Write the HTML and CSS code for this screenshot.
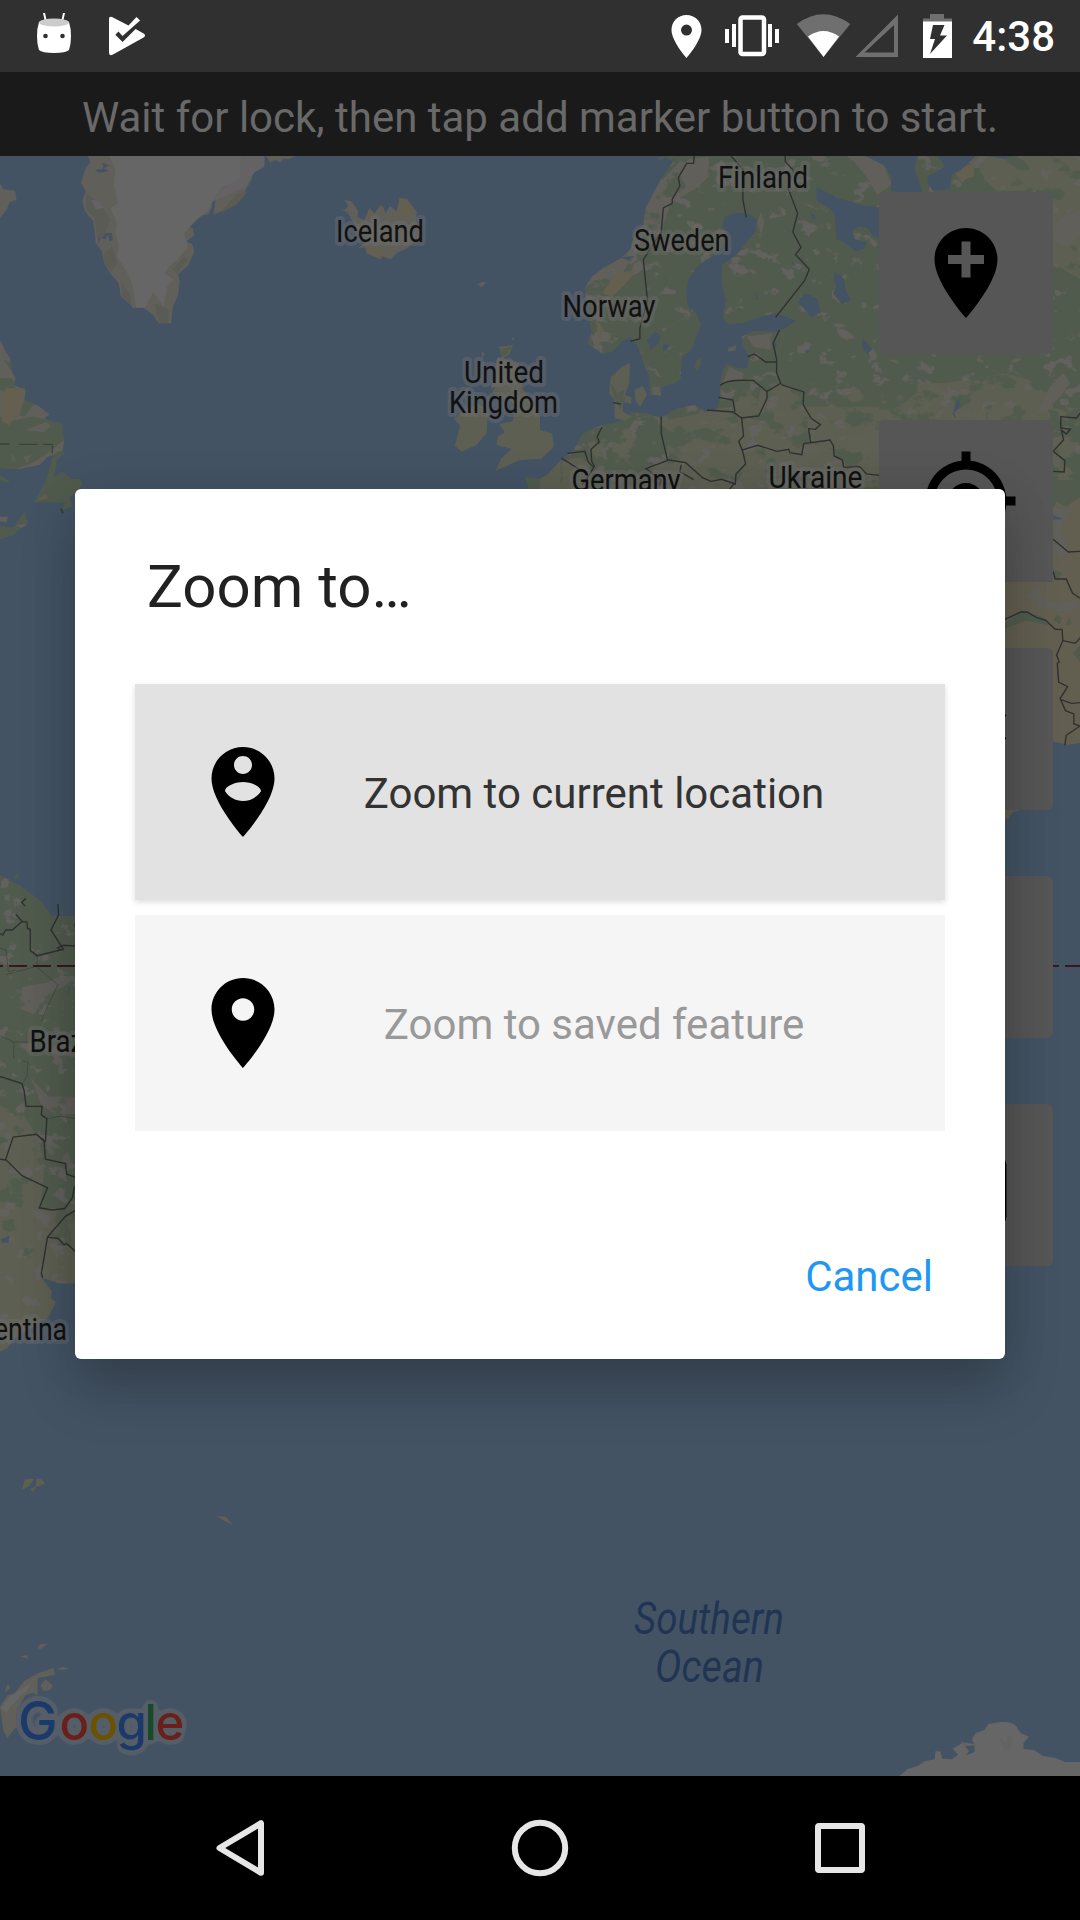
FILE: index.html
```html
<!DOCTYPE html>
<html lang="en">
<head>
<meta charset="utf-8">
<title>Zoom to…</title>
<link rel="stylesheet" href="styles.css">
</head>
<body>
<div class="screen">
  <header class="status-bar">
    <div class="status-group">
      <svg class="notification" width="34" height="54" viewBox="37 0 34 54">
        <path class="on" d="M43 13l2 0 2 9-2 0zM63 13h2l-2 9h-2z"/>
        <path class="on" d="M39 22q15-6 30 0 2 6 2 14t-2 14q-3 3-15 3t-15-3q-2-6-2-14t2-14z"/>
        <ellipse class="cap" cx="54" cy="22.500" rx="15" ry="4"/>
        <circle class="hole" cx="45.500" cy="36" r="2.300"/><circle class="hole" cx="62.500" cy="36" r="2.300"/>
      </svg>
      <svg class="notification" width="37" height="56" viewBox="109 0 37 56">
        <path class="on" d="M109 19q0-3 3-2l16.500 8.500 8-8.500 3.600 3.500L122.500 36l-4-4.500-3.200 3.200 7.300 7.300 13-13 8 4.500q3 2 0 4L113 54.500q-4 2-4-2z"/>
      </svg>
    </div>
    <div class="status-group right">
      <svg width="385" height="72" viewBox="660 0 385 72">
        <path class="on" fill-rule="evenodd" d="M686.500 15c-8.500 0-15 6.500-15 15 0 11 15 28 15 28s15-17 15-28c0-8.500-6.500-15-15-15zm0 9.600a5.500 5.500 0 1 1 0 11 5.500 5.500 0 0 1 0-11z"/>
        <rect class="line" x="740.500" y="17.500" width="23.500" height="36.500" rx="2"/>
        <path class="on" d="M725 29h4v14h-4zM732 24h4v23h-4zM768 24h4v23h-4zM775 29h4v14h-4z"/>
        <path class="off" d="M796.800 24q26.500-19.500 53.500 0L823.500 57z"/>
        <path class="on" d="M808 36.500q15.500-11 31 0L823.500 57z"/>
        <path class="off" fill-rule="evenodd" d="M898 14.500V57h-42.500zM894 25L864.500 52.500H894z"/>
        <path class="off" d="M930 14h14v4.500h8V22h-29v-3.500h7z"/>
        <path class="on" fill-rule="evenodd" d="M923 21.500h29V58h-29zM933 25l-3 14h5l-5 15 17-18.500h-7l4.500-10.500z"/>
      </svg>
      <time class="clock">4:38</time>
    </div>
  </header>

  <div class="banner"><p class="banner-text">Wait for lock, then tap add marker button to start.</p></div>

  <main class="map">
    <svg class="map-canvas" width="1080" height="1620" viewBox="0 156 1080 1620">
      <defs>
        <filter id="scrub" x="0" y="0" width="1" height="1" color-interpolation-filters="sRGB">
          <feTurbulence type="fractalNoise" baseFrequency="0.02 0.024" numOctaves="4" seed="7"/>
          <feColorMatrix values="0 0 0 0 .388  0 0 0 0 .38  0 0 0 0 .365  14 0 0 0 -8.500"/>
          <feComposite operator="in" in2="SourceGraphic"/>
        </filter>
        <filter id="plain" x="0" y="0" width="1" height="1" color-interpolation-filters="sRGB">
          <feTurbulence type="fractalNoise" baseFrequency="0.011 0.013" numOctaves="4" seed="21"/>
          <feColorMatrix values="0 0 0 0 .365  0 0 0 0 .375  0 0 0 0 .32  0 18 0 0 -9.900"/>
          <feComposite operator="in" in2="SourceGraphic"/>
        </filter>
        <filter id="wood" x="0" y="0" width="1" height="1" color-interpolation-filters="sRGB">
          <feTurbulence type="fractalNoise" baseFrequency="0.014 0.018" numOctaves="4" seed="4"/>
          <feColorMatrix values="0 0 0 0 .318  0 0 0 0 .357  0 0 0 0 .302  0 0 14 0 -8.200"/>
          <feComposite operator="in" in2="SourceGraphic"/>
        </filter>
        <filter id="halo" filterUnits="userSpaceOnUse" x="0" y="1680" width="210" height="96" color-interpolation-filters="sRGB">
          <feGaussianBlur in="SourceAlpha" stdDeviation="3.600"/>
          <feColorMatrix values="0 0 0 0 .333  0 0 0 0 .365  0 0 0 0 .4  0 0 0 22 -1"/>
          <feMerge><feMergeNode/><feMergeNode in="SourceGraphic"/></feMerge>
        </filter>
        <path id="europe" d="M395 18L380 45 350 90 330 130 308 170 300 225 275 250 262 300 235 325 190 350 150 380 130 415 135 470 145 520 150 545 138 580 182 612 212 605 235 575 262 562 285 590 300 640 318 680 320 735 350 738 355 710 383 702 408 690 413 620 440 600 467 525 455 490 430 470 425 430 430 390 455 350 480 330 520 310 530 290 545 255 530 230 535 200 570 188 610 192 630 210 628 240 600 275 575 310 550 330 528 345 528 400 540 450 530 500 545 522 590 518 650 498 680 490 745 512 720 530 690 545 620 543 585 560 590 590 605 615 603 655 575 655 540 640 525 680 522 740 515 775 480 785 450 765 400 775 350 803 310 790 265 785 240 812 165 830 125 850 95 905 62 930 20 975 0 985V1100H1568V18z"/>
        <clipPath id="europe-clip"><use href="#europe"/></clipPath>
        <path id="america" d="M0 70l60 30 60 45 30 40h68v1028h-48l-50-16 30 38-2 20 14 10-22 45-40 20-60 40-20 25-20 10z"/>
        <clipPath id="america-clip"><use href="#america"/></clipPath>
      </defs>

      <!-- North Atlantic: Greenland, Iceland, Labrador, British Isles -->
      <g transform="translate(0 150) scale(.3444 .3333)">
        <path class="rock" d="M255 18l7 18-14 20-13 42 14 26-10 28 8 32 24 30 7 66 17 22 8 40 20 32 22 26 6 40 18 10 16 23h30l28 20 18 27h36l5-50 15-36 5-40-5-20 30-30 17-38-6-24-16-8 22-18-4-22-16-4 22-14 5-16 35-8 10-22-4-20 14-2-6 46 50-24 34-34 26-46 5-30 24-16V18z"/>
        <path class="rock-shade" d="M250 130l40 30 30 50-15 40-20 20-10-65-25-25zM300 310l25-20 15 50-15 25-20-20zM355 400l25 40 0 25-25-20zM450 460l40 20-3 38-20 0-12-25zM500 360l35-40 12 10-32 40zM655 170l35-40 30-5-35 40-45 24z"/>
        <path class="water" d="M275 60l15 8 25-4-13-10 15-8-22-8 6 12-4 8zM285 282l6-18 14 4 10-14 2 20 10-4-2-22-18 2-12 14-10-2z"/>
        <path class="ice" d="M318 18l17 42-5 40 12 60-22 15 20 45-5 30 10 35-5 35 25 40 20 45 10 68 25 0 25-48 30 45 10-60 20-20-25-20 10-20 25-20 30-40-10-40 30-35 40-35 15-30 25-40 60-20V50l30-32z"/>
        <path class="snow" d="M700 18h68v32l-28 16-30 45-60 30-34 14 30-40 50-30zM265 150l25 2 12 22-25 4z"/>
        <path class="rock" d="M770 18h86l-16 10-18-2-8 12-14-8-16 8-8-16zM0 100l10 18 34 4 4 28-20 6-8 22-20 26z"/>
        <path class="rock" d="M985 175l15 5 12-12-12-18 20 4 20 28-2 20 20 8 14-36 16 16 16-24 8 4 8 20 12-22 20 16 8-40 22 2 12 18 16 20-2 30 12 20-6 34-30 26-30 14-20 20-50-18-18-18-26 2 20-15-50-90z"/>
        <path class="sand" d="M1160 145l20 5 25 30-20 20-30-5 10-18zM1070 180l16 16-16 14zM1060 290l60 10-15 28-40-18z"/>
        <path class="rock" d="M1385 403l12-6 14-2-12 17z"/>
        <path class="scrub-land" d="M0 570l14 30 16 25 0 30 15 30-5 20 35 15-5 35 38 10 36 28-15 12 52 40 5 30-5 30-42 15-24 25-60 12-55-3z"/>
        <path class="green" d="M0 685h35l10 30-30 10-15-5zM12 630l18 5 8 38zM70 750l30 10-30 40-14-4zM95 800l85 20 5 50-35 30-55 38-50 20-45-4V800l45 10z"/>
        <path class="sand" d="M15 715l58 0-6 36-20 50-20 25-22-12 0-40z"/>
        <path class="scrub-land" d="M75 840l60-25 12 12-20 20zM30 905l12 20-2 16zM68 920l22-6-12 28z"/>
        <path class="border" d="M0 882h28M55 883h54M125 883h27v27" opacity=".6"/>
        <path class="green" d="M190 905l-24 25-10 50 25-15 28 22 22 0 8 12-12 26-25 15 8 30-35 14 15-26-90-2 20-38 15-30 15-60 18-24zM0 975l30 20-12 2-18-6z"/>
        <path class="sand" d="M105 1052l28-20 6 14z"/><path class="border" d="M178 1076l4 14"/>
        <path class="green" d="M72 1083l2 18 8 22-26 15-16 18-40 12v-40l40 4z"/><path class="scrub-land" d="M0 1100h24l-6 18-18-4zM45 1125l34-4-16 14z"/>
        <path class="olive" d="M1445 590l45-4-12 28-20 12 18 4 30 6 12 80 50 80v130l-60 5-70 32 18-38 30-28-44-12 4-26 20-12-16-24 40-10 4-50-20-16-30-2-14-18 22-60 6-60zM1398 604l10 6-8 16z"/>
        <path class="scrub-land" d="M1445 620l30 20 10 80-20 20-30-30-10 10 10-50z"/>
        <path class="olive" d="M1335 790l55-30 26 28-3 62-30 35-42 20-20-18 15-60-18-20z"/>
        <path class="green" d="M1450 600l36-10-15 24-15 6zM1524 980l44 6v32h-32z"/><path class="rock" d="M1485 568l6-6 5 10z"/>
      </g>

      <!-- Northern and eastern Europe -->
      <g transform="translate(540 150) scale(.3444 .3333)">
        <path class="olive" d="M0 840l35 10 5 40-40 40z"/>
        <use class="green" href="#europe"/>
        <g clip-path="url(#europe-clip)">
          <path class="olive" d="M485 785l90-20 240 5 170 0v260H390l10-50-30-60 0-110 70-14zM0 990l60-60 80-10 10 90-20 50H0zM0 1005h985v30H0z"/>
          <path class="olive" d="M640 720l60-20 60 30 10 50 230 0 60-20 60-60 50 0 180-30 140 40v520H700l-100-300zM1230 18h338v370l-80-50V120l-160 4-60-56z"/>
          <path class="rock" d="M410 30l80-10 0 60-30 30-80 50-30 90-60 30-50 90-30 60-60 20-60 0 40-120 110-40 30-60 30-80z"/>
          <path class="scrub" d="M60 18h1508v1100H60z"/>
          <path class="plain" d="M350 700h1218v420H60l100-300z"/>
          <path class="wood" d="M60 18h1508v1100H60z"/>
        </g>
        <path class="scrub-land" d="M900 18h60l40 30 20 57-40 30-30-50zM640 185l12 30-10 36-12-30zM600 560l70-10 0 50-50-10zM550 650l40 20 0 20-60 10zM325 710l22 0 0 24-20 0z"/>
        <path class="sand" d="M220 370l60-10-30 40-40 40-30-10zM160 500l26 40-16 30zM1200 60l60-20 0 40-40 10zM180 440l30 5-30 15z"/>
        <path class="water" d="M945 18h150l-7 40 22 70-50 0-42-6 2-40-20-36zM1125 80l50-30-20-32h110l-45 45-25 10-5 45-50 4-15-25zM1300 18h70l-22 8zM803 112l62 32 70 22 50 6v92l-20-6-14-24-24-6-22 16 10 24 34 8-8 20-24 8-32-26-24-10-6-74-12-18-40-24zM770 430l36 16 8 40-26 18-12-18-28-30zM855 365l28 22 4 32 16 30-26 14-26-32 10-22-8-20zM310 570l24-24 14 10-4 24-22 20zM358 585l14-6 4 12-18 14zM935 565l30 32-14 14-14-18zM1220 745l-2 30-16 12 8 20-12-14 10-36zM700 495l45 20-45 14zM785 185l20 20-14 4zM730 330l12 16-8 2zM235 322l40-4-18 14zM630 430l4 20-8-4zM770 600l16 4-14 6zM680 570l8 14-8 22z"/>
        <path class="olive" d="M205 682l32-30 24-14-2 62-16 44-4 40 28 16-20 14-30-10-2-56-14-20zM275 720l22-12 14 24-20 38-14-20zM245 735l20 6 0 20-20-4zM545 595l26-10-4 16-20 4z"/>
        <path class="green" d="M468 624l-2 20-10 20-8-12 6-20zM205 700l20 30 20-10-10 60-22-40zM340 22l30-4h40l-28 12-20-8-14 12z"/>
        <path class="scrub-land" d="M1490 230l30-30 48-20v80l-40 30-38-20zM1450 780l30-70 40-40 20 30-30 40-50 50zM1530 1050l38-60v70l-38 20z"/>
        <path class="border" d="M448 18l-2 22-20 0-24 42 4 26-22 40 0 12-26 14-6 74-20 28-32 54 12 120-22 84v32l-28 8M555 18l34 40 0 90 10 54M712 18l0 16 24 28-16 52 28 76-14 56 24 46-16 22 40 44-14 34-84 110M695 540l-18 40 10 48v40l12 32-40 24 0 22-24 52-50 6-24-18-76-6M518 742l42 8 6 34M523 707q15-18 80-16l16 0 40 34M603 620l20-8 32 24 30 0M700 704l66 22-2 38 24 42 26 18-14 14-20-2 6 42 56-8 10 18 2 30 24 12 4 22 46-2 20 22 40 4M788 878l-22 2-6 34-34-6-4-10-34 6-56-18-44 14M585 800l6 58-14 16 12 32 8 36-28 30-2 30-40-14-30 6-24-10-50-46-48-8-68 26 44 34-4 18M352 800l0 50 18 80M180 832l-14 28 6 16-24 22 2 36 8 14-20 36-16 20M62 924l76 50M80 910l50-6 10 32 14 14M410 945l-4 20 40 24M212 758l22 4M550 1018l14-18M1568 790l-10 14-46-4 0 34 28 4-12 14-14-12 6 30-30 34 34 28-2 34-32-2M1490 1167l40 36"/>
      </g>

      <!-- Middle East and Arabian Sea -->
      <g transform="translate(540 480) scale(.3444 .3333)">
        <path class="desert" d="M1480 120l20-60 68-60v790l-34 5-44-10-90-60-60-40V306h148z"/>
        <path class="scrub-land" d="M1490 80l50 10-30 60 20 40 0 40-40-10zM1395 350l60-30-6 30 50 20 60-10 0 30-60 6-20-16-40 10 8-20-30-14z"/>
        <path class="green" d="M1350 430l50-36 60 18 20 24-70-14-60 24zM1500 405l16 8-6 20-20-12zM1538 408l6 24-18 4zM1548 520l20-24v50zM1490 270l26 10-10 14-16-4zM1490 0h78v50l-40 30-38-20z"/>
        <path class="water" d="M1490 105l28 12-28 2zM1340 990h228v-200l-34 5-44-9-160 204v1000h238v-980z"/>
        <path class="desert" d="M1350 990h46l-22 6-14 20h-10z"/>
        <path class="border" d="M1350 418l46-22h18l30 18 24 6 28 28 20 0 2 34-18 44 8 20-6 4 4 56 26 14-22 36 16 36 24 10 0 30 18 6-40 28-4 30M1490 275l6 22h32l18 42 22 16M1490 178l44 38 34-2M1518 482l36 8 14-16M1510 658l34 12 24-2"/>
      </g>

      <!-- South America -->
      <g transform="translate(0 850) scale(.3444 .3571)">
        <use class="green" href="#america"/>
        <path class="green" d="M42 80l4-12h10l-4 12z"/>
        <g clip-path="url(#america-clip)">
          <path class="olive" d="M0 715l70 30 40 60 20 80-14 120 102-8v420H0z"/>
          <path class="scrub-land" d="M20 400l60-20 60-10 40-20 38 10-60 40-30 20-30 40-50-20zM90 640l50 50 78 0v50l-60 0-40-30zM130 800l70 50 10 40-70-40z"/>
          <path class="scrub" d="M0 60h218v1360H0z"/>
          <path class="wood" d="M0 60h218v1100H0z"/>
        </g>
        <path class="water" d="M2 1090l26-10-4 20-18 0zM205 382l-8 26 2-26z"/>
        <path class="border" d="M0 234l8 4 8-14 20 0 28-24 14 2 2 18 8 2v60l20 14 76-18-36-54 22-42-2-30M64 200l-18-20M75 135l-12 12 10 10M165 275l20-8 34 2M168 278l16 2M218 205v10M0 634l64 20 6 20 6 44 46 0-2 24 16 10-4 64-28-20-66 8-22 64-18-2M128 816l-22-20M18 868l46 44 74 34-24 56 38 6 36-4 22-30 6-32M128 816l4 50 58 12 4 30 24 8M218 1010l-28 16-52 58-18 102 4 12M138 1084l32 4 16 18 8-4 26 24"/>
        <path class="border faint" d="M0 275l18 6 6 60 20-5M108 295v30l-90 24M108 328l60 50-30 60-18 42M0 520l40 18v46M40 538l40 0M64 590l18 4-4 40-10 16M136 752l40-6 40 6"/>
      </g>

      <!-- Southern islands and Antarctica -->
      <g transform="translate(0 1400) scale(.3444 .3333)">
        <path class="olive" d="M64 270l8-32 28-2-16 22zM88 268l16-10 2-22 12 0 14 14-28 12-8 14z"/>
        <path class="rock" d="M628 347l28 4 20 24-28-14zM108 742l10-10 20 0-22 16zM58 769l22-4 0 12zM168 808l12-8 22 6-20 4z"/>
        <path class="rock" d="M0 920l22-34 20-6 28-36 40-24 44-16 6 20-50 10-2 54-10-10-24 8-22 40-6 24 30-10 14 36-46 8-22 30-12-20zM118 856l14-18 22 20-8 12-20 4zM15 870l8-20 6 14-12 12z"/>
        <path class="ice" d="M2 925l28-36 60-40-10 20-46 46-16 24z"/>
        <path class="ice" d="M2612 1128l22-20 30-10 20-14 30-6 2-24h14l6 22 28 2 18-14-16-18 26-16 22 22-8 14 24-10 0-22-8-16 10-18 26-10 12-18 36-6q32-2 44 12l14 22 24 10-16 18 0 20 30 2 26 18 38 6 26 12 54 0v74z"/>
        <path class="snow" d="M2900 1010l20 20 6-24 10 0-2 40-16 8zM2792 1026l50 8-50 6z"/>
      </g>

      <path class="equator" d="M-15 966H1080"/>

      <g class="place-labels">
        <text x="336" y="242" textLength="88" lengthAdjust="spacingAndGlyphs">Iceland</text>
        <text x="718" y="188" textLength="90" lengthAdjust="spacingAndGlyphs">Finland</text>
        <text x="634" y="251" textLength="95.500" lengthAdjust="spacingAndGlyphs">Sweden</text>
        <text x="562.500" y="317" textLength="93" lengthAdjust="spacingAndGlyphs">Norway</text>
        <text x="464" y="383" textLength="80" lengthAdjust="spacingAndGlyphs">United</text>
        <text x="449" y="413" textLength="109" lengthAdjust="spacingAndGlyphs">Kingdom</text>
        <text x="571.500" y="491" textLength="109" lengthAdjust="spacingAndGlyphs">Germany</text>
        <text x="768.500" y="488" textLength="94" lengthAdjust="spacingAndGlyphs">Ukraine</text>
        <text x="29.500" y="1051.500" textLength="68" lengthAdjust="spacingAndGlyphs">Brazil</text>
        <text x="-47" y="1340" textLength="114" lengthAdjust="spacingAndGlyphs">Argentina</text>
      </g>
      <g class="ocean-labels">
        <text x="634" y="1634" textLength="150" lengthAdjust="spacingAndGlyphs">Southern</text>
        <text x="655" y="1681.500" textLength="109" lengthAdjust="spacingAndGlyphs">Ocean</text>
      </g>
      <text class="attribution" y="1740"><tspan class="blue wide" x="18">G</tspan><tspan class="red" x="59.500">o</tspan><tspan class="yellow" x="88.500">o</tspan><tspan class="blue" x="116.500">g</tspan><tspan class="leaf" x="144.500">l</tspan><tspan class="red" x="155.500">e</tspan></text>
    </svg>

    <div class="map-tools">
      <button class="tool"><svg class="icon" viewBox="0 0 24 24"><path d="M12 2C8.140 2 5 5.140 5 9c0 5.250 7 13 7 13s7-7.750 7-13c0-3.860-3.140-7-7-7zm4 8h-3v3h-2v-3H8V8h3V5h2v3h3v2z"/></svg></button>
      <button class="tool"><svg class="icon" viewBox="0 0 24 24"><path d="M12 8c-2.210 0-4 1.790-4 4s1.790 4 4 4 4-1.790 4-4-1.790-4-4-4zm8.940 3c-.46-4.170-3.770-7.480-7.940-7.940V1h-2v2.060C6.830 3.520 3.520 6.830 3.060 11H1v2h2.060c.46 4.170 3.770 7.480 7.940 7.940V23h2v-2.060c4.170-.46 7.480-3.770 7.940-7.940H23v-2h-2.060zM12 19c-3.870 0-7-3.130-7-7s3.130-7 7-7 7 3.130 7 7-3.130 7-7 7z"/></svg></button>
      <button class="tool"><svg class="icon" viewBox="0 0 24 24"><path d="M11.990 18.540l-7.370-5.730L3 14.070l9 7 9-7-1.630-1.270-7.380 5.740zM12 16l7.360-5.730L21 9l-9-7-9 7 1.630 1.270L12 16z"/></svg></button>
      <button class="tool"></button>
      <button class="tool"><svg class="icon" viewBox="0 0 24 24"><rect x="3" y="5.500" width="18" height="15.500" rx="2"/></svg></button>
    </div>
  </main>

  <nav class="nav-bar">
    <svg class="nav-icon" viewBox="0 0 60 60"><path d="M51 5.200v49.600L9.500 30z"/></svg>
    <svg class="nav-icon" viewBox="0 0 60 60"><circle cx="30" cy="30" r="25.200"/></svg>
    <svg class="nav-icon" viewBox="0 0 60 60"><rect x="8" y="8" width="44" height="44" rx="1"/></svg>
  </nav>

  <div class="overlay">
    <section class="dialog" role="dialog">
      <h1 class="dialog-title">Zoom to…</h1>
      <div class="options">
        <button class="option">
          <svg class="icon" viewBox="0 0 24 24"><path fill-rule="evenodd" d="M12 2C8.140 2 5 5.140 5 9c0 5.250 7 13 7 13s7-7.750 7-13c0-3.860-3.140-7-7-7zm0 2c1.100 0 2 .9 2 2 0 1.110-.9 2-2 2s-2-.89-2-2c0-1.100.9-2 2-2zm0 10c-1.670 0-3.140-.85-4-2.150.02-1.320 2.670-2.050 4-2.050s3.980.73 4 2.050c-.86 1.300-2.330 2.150-4 2.150z"/></svg>
          <span class="option-label">Zoom to current location</span>
        </button>
        <button class="option disabled" disabled>
          <svg class="icon" viewBox="0 0 24 24"><path d="M12 2C8.130 2 5 5.130 5 9c0 5.250 7 13 7 13s7-7.750 7-13c0-3.870-3.130-7-7-7zm0 9.500c-1.380 0-2.500-1.120-2.500-2.500s1.120-2.500 2.500-2.500 2.500 1.120 2.500 2.500-1.120 2.500-2.500 2.500z"/></svg>
          <span class="option-label">Zoom to saved feature</span>
        </button>
      </div>
      <button class="cancel">Cancel</button>
    </section>
  </div>
</div>
</body>
</html>
```
FILE: styles.css
```css
* { box-sizing: border-box; }
body { margin: 0; background: #000; }
button { border: 0; padding: 0; margin: 0; font: inherit; letter-spacing: inherit; }
.screen {
  position: relative;
  display: flex;
  flex-direction: column;
  width: 1080px;
  height: 1920px;
  overflow: hidden;
  font-family: Roboto, sans-serif;
  font-size: 42px;
}

/* system bars */
.status-bar {
  display: flex;
  justify-content: space-between;
  height: 72px;
  padding: 0 25px 0 37px;
  background: #303030;
  color: #fff;
}
.status-group { display: flex; gap: 38px; }
.status-group.right { gap: 0; align-items: center; }
.status-group.right svg { width: 385px; margin-right: -73px; }
.clock { font-weight: 500; line-height: 72px; padding-top: 2px; }
.on { fill: #fff; }
.off { fill: #6f6f6f; }
.cap { fill: #ccc; }
.hole { fill: #303030; }
.line { fill: none; stroke: #fff; stroke-width: 4.5; }

.banner {
  height: 84px;
  display: flex;
  justify-content: center;
  align-items: center;
  background: #1a1a1a;
  color: #696969;
}
.banner-text { margin: 7px 0 0; white-space: nowrap; }

.nav-bar {
  height: 144px;
  display: flex;
  justify-content: center;
  align-items: center;
  gap: 240px;
  background: #000;
}
.nav-icon {
  width: 60px;
  height: 60px;
  fill: none;
  stroke: #e6e6e6;
  stroke-width: 6;
  stroke-linejoin: round;
}

/* map */
.map { position: relative; height: 1620px; background: #435364; overflow: hidden; }
.map-canvas { display: block; }
.water { fill: #435364; }
.green { fill: #505b4d; }
.olive { fill: #5d5f52; }
.desert { fill: #625e50; }
.sand { fill: #655f4f; }
.rock { fill: #605f5a; }
.rock-shade { fill: #5a5b55; }
.scrub-land { fill: #605f5a; }
.snow { fill: #646265; }
.ice { fill: #666; }
.scrub { filter: url(#scrub); }
.plain { filter: url(#plain); }
.wood { filter: url(#wood); }
.border { fill: none; stroke: #303030; stroke-width: 4; }
.border.faint { stroke-width: 2; opacity: .6; }
.equator { stroke: #3a171f; stroke-width: 2; stroke-dasharray: 18 6; }
.place-labels {
  font-size: 30.5px;
  fill: #111;
  stroke: rgba(110, 110, 110, .42);
  stroke-width: 8;
  paint-order: stroke;
  stroke-linejoin: round;
}
.ocean-labels { font-size: 45px; font-style: italic; fill: #213553; }
.attribution {
  font-family: Inter, sans-serif;
  font-size: 49px;
  font-weight: 500;
  filter: url(#halo);
}
.attribution .wide { font-size: 53px; }
.blue { fill: #1b3a6b; }
.red { fill: #6b1f1a; }
.yellow { fill: #6b5200; }
.leaf { fill: #17492a; }

.map-tools {
  position: absolute;
  top: 36px;
  right: 27px;
  display: flex;
  flex-direction: column;
  gap: 66px;
}
.tool {
  display: flex;
  justify-content: center;
  align-items: center;
  width: 174px;
  height: 162px;
  border-radius: 6px;
  background: #565656;
}
.icon { display: block; width: 108px; height: 108px; fill: #000; flex: none; }

/* dialog */
.overlay {
  position: absolute;
  inset: 72px 0 144px;
  display: flex;
  justify-content: center;
  align-items: center;
}
.dialog {
  display: flex;
  flex-direction: column;
  width: 930px;
  height: 870px;
  padding: 62px 60px 54px;
  border-radius: 6px;
  background: #fff;
  box-shadow: 0 32px 56px rgba(0, 0, 0, .2), 0 4px 48px rgba(0, 0, 0, .1);
}
.dialog-title {
  margin: 0 12px 61px;
  font-size: 60px;
  font-weight: 400;
  line-height: 72px;
  color: #212121;
}
.options { display: flex; flex-direction: column; gap: 15px; }
.option {
  display: flex;
  align-items: center;
  height: 216px;
  padding: 0 54px;
  background: #e2e2e2;
  color: #333;
  box-shadow: 0 2px 6px rgba(0, 0, 0, .14);
}
.option.disabled { background: #f5f5f5; color: #999; box-shadow: none; }
.option-label { flex: 1; text-align: center; white-space: nowrap; padding-top: 2px; }
.cancel {
  align-self: flex-end;
  margin: 121px 12px 0 0;
  line-height: 50px;
  background: none;
  color: #2196f3;
}
```
